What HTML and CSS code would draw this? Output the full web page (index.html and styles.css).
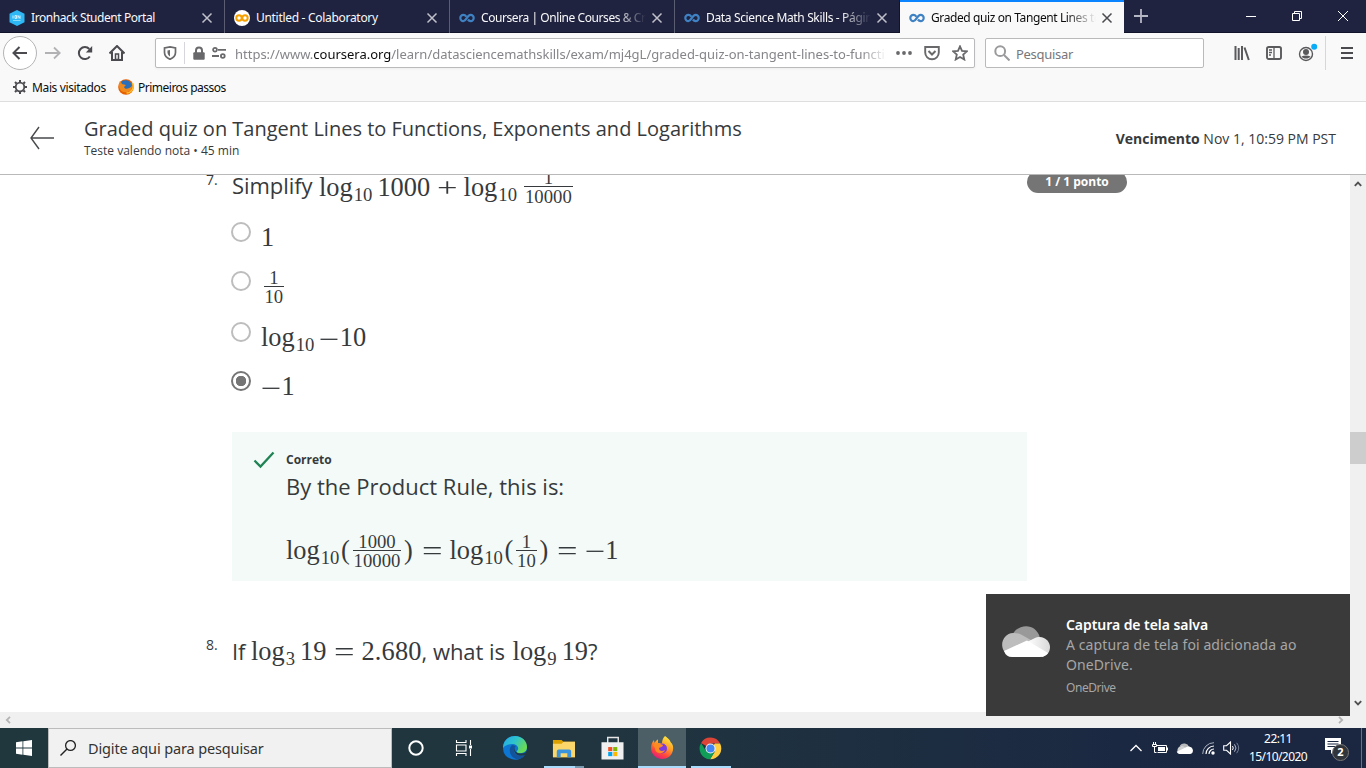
FILE: index.html
```html
<!DOCTYPE html>
<html lang="pt-BR">
<head>
<meta charset="utf-8">
<title>Graded quiz on Tangent Lines to Functions</title>
<link rel="stylesheet" href="styles.css">
</head>
<body>
<svg class="defs" width="0" height="0">
  <symbol id="x" viewBox="0 0 12 12"><path d="M1.500 1.500l9 9M10.500 1.500l-9 9" fill="none" stroke="currentColor" stroke-width="1.500"/></symbol>
  <symbol id="coursera" viewBox="0 0 16 10"><path d="M7.300 3.600C6.500 2.500 5.500 1.900 4.400 1.900a3.100 3.100 0 0 0 0 6.200C7.600 8.100 7.900 1.900 11.600 1.900a3.100 3.100 0 0 1 0 6.200c-1.200 0-2-.6-2.700-1.600" fill="none" stroke="#3f82c4" stroke-width="2.200"/></symbol>
</svg>

<header class="tabs">
  <div class="tab">
    <svg class="fav" viewBox="0 0 16 16"><path d="M8 0l7.500 3.800v8.400L8 16 .5 12.200V3.800z" fill="#2db8f5"/><path d="M4 5.500v3M6 5.500h1.500v3H6zM9 8.500v-3l2 3v-3" fill="none" stroke="#e2f6ff" stroke-width=".9"/><path d="M4 10.500h7.500" stroke="#8bdafa"/></svg>
    <span class="label t1">Ironhack Student Portal</span><svg class="close"><use href="#x"/></svg>
  </div>
  <div class="tab">
    <svg class="fav" viewBox="0 0 16 16"><circle cx="8" cy="8" r="8" fill="#fff"/><g fill="none" stroke="#f6a000" stroke-width="2"><circle cx="5" cy="8" r="2.700"/><circle cx="11" cy="8" r="2.700"/></g></svg>
    <span class="label t2">Untitled - Colaboratory</span><svg class="close"><use href="#x"/></svg>
  </div>
  <div class="tab">
    <svg class="fav"><use href="#coursera"/></svg>
    <span class="label t3 fade">Coursera | Online Courses &amp; Cre</span><svg class="close"><use href="#x"/></svg>
  </div>
  <div class="tab nosep">
    <svg class="fav"><use href="#coursera"/></svg>
    <span class="label t4 fade">Data Science Math Skills - Págin</span><svg class="close"><use href="#x"/></svg>
  </div>
  <div class="tab active">
    <svg class="fav"><use href="#coursera"/></svg>
    <span class="label t5 fade">Graded quiz on Tangent Lines to</span><svg class="close"><use href="#x"/></svg>
  </div>
  <svg class="newtab" viewBox="0 0 16 16"><path d="M8 1v14M1 8h14" stroke="#b5b6c4" stroke-width="1.800"/></svg>
  <div class="winbtns">
    <svg viewBox="0 0 12 12"><path d="M1 6.500h10" stroke="#fff"/></svg>
    <svg viewBox="0 0 12 12"><path d="M1.500 3.500h7v7h-7zM3.500 3.500v-2h7v7h-2" fill="none" stroke="#fff"/></svg>
    <svg viewBox="0 0 12 12"><path d="M1 1l10 10M11 1L1 11" stroke="#fff"/></svg>
  </div>
</header>

<nav class="toolbar">
  <div class="back"><svg class="i16" viewBox="0 0 16 16"><path d="M15 8H2M7.500 2L1.500 8l6 6" fill="none" stroke="#4a4a4f" stroke-width="2"/></svg></div>
  <svg class="i16 fwd" viewBox="0 0 16 16"><path d="M0 8h14M9 2.500L14.700 8 9 13.500" fill="none" stroke="#b2b2b4" stroke-width="1.800"/></svg>
  <svg class="i16 reload" viewBox="0 0 16 16"><path d="M12.800 11.500A6 6 0 1 1 12.300 4" fill="none" stroke="#4a4a4f" stroke-width="2"/><path d="M15.200 1v6.500H8.800z" fill="#4a4a4f"/></svg>
  <svg class="i16 home" viewBox="0 0 16 16"><path d="M.5 8.500L8 1l7.500 7.500M3 7v8h10V7" fill="none" stroke="#4a4a4f" stroke-width="2"/><path d="M6.500 9h3v5.500h-3z" fill="none" stroke="#4a4a4f" stroke-width="1.500"/></svg>
  <div class="urlbar">
    <svg class="shield" viewBox="0 0 14 14"><path d="M7 .9L12.500 2v4.500c0 3.400-2.500 5.500-5.500 6.800C4 12 1.500 9.900 1.500 6.500V2z" fill="none" stroke="#69696c" stroke-width="1.700"/><path d="M7 4v6.500C5.500 9.500 4.500 8 4.500 6.500v-2z" fill="#69696c"/></svg>
    <i class="vsep"></i>
    <svg class="lock" viewBox="0 0 14 14"><path d="M4 7V4.500a3 3 0 0 1 6 0V7" fill="none" stroke="#69696c" stroke-width="2"/><rect x="1.300" y="6.200" width="11.400" height="7.600" rx="1" fill="#69696c"/></svg>
    <svg class="perm" viewBox="0 0 14 12"><g fill="none" stroke="#69696c" stroke-width="1.800"><circle cx="3" cy="2.800" r="1.900"/><path d="M6 2.800h8M0 9h7"/><circle cx="10.800" cy="9" r="1.900"/></g></svg>
    <span class="url">https://www.<b>coursera.org</b>/learn/datasciencemathskills/exam/mj4gL/graded-quiz-on-tangent-lines-to-functi</span>
    <svg class="i16 dots" viewBox="0 0 16 16"><g fill="#69696c"><circle cx="2" cy="8" r="1.900"/><circle cx="8" cy="8" r="1.900"/><circle cx="14" cy="8" r="1.900"/></g></svg>
    <svg class="i16" viewBox="0 0 16 16"><path d="M1.200 2h13.600v5.500a6.800 6.800 0 0 1-13.600 0z" fill="none" stroke="#69696c" stroke-width="1.900"/><path d="M4.500 6L8 9.500 11.500 6" fill="none" stroke="#69696c" stroke-width="2"/></svg>
    <svg class="i16 star" viewBox="0 0 16 16"><path d="M8 1.300l2 4.500 4.900.5-3.700 3.300 1.100 4.900L8 12l-4.300 2.500 1.100-4.900L1.100 6.300 6 5.800z" fill="none" stroke="#69696c" stroke-width="1.800"/></svg>
  </div>
  <div class="searchbar">
    <svg class="i16" viewBox="0 0 16 16"><circle cx="6.200" cy="6.200" r="4.900" fill="none" stroke="#9a9a9c" stroke-width="2"/><path d="M10 10l5.500 5.500" stroke="#9a9a9c" stroke-width="2"/></svg>
    <span>Pesquisar</span>
  </div>
  <svg class="i16 lib" viewBox="0 0 16 16"><path d="M1.500 1v14M4.700 3v12M8 1v14M10.500 2.500l4.300 12.500" stroke="#5a5a5d" stroke-width="2" fill="none"/></svg>
  <svg class="i16 side" viewBox="0 0 16 16"><rect x="1" y="2" width="14" height="12" rx="1.800" fill="none" stroke="#5a5a5d" stroke-width="1.900"/><path d="M8 2v12M3 5h3M3 7.500h3M3 10h2" stroke="#5a5a5d" stroke-width="1.300"/></svg>
  <svg class="acct" viewBox="0 0 20 20"><circle cx="8" cy="12" r="6.500" fill="none" stroke="#5a5a5d" stroke-width="1.400"/><circle cx="8" cy="10" r="3" fill="#5a5a5d"/><path d="M3.500 14.500c2 2.800 7 2.800 9 0-2.500-1.500-6.500-1.500-9 0z" fill="#5a5a5d"/><circle cx="16.200" cy="4.700" r="3" fill="#0aacf7"/></svg>
  <i class="vsep tall"></i>
  <svg class="menu" viewBox="0 0 12 14"><path d="M0 2h12M0 7h12M0 12h12" stroke="#4a4a4f" stroke-width="2"/></svg>
</nav>

<nav class="bookmarks">
  <svg class="gear" viewBox="0 0 16 16"><circle cx="8" cy="8" r="4.300" fill="none" stroke="#4a4a4f" stroke-width="1.800"/><path d="M8 1v2M8 13v2M1 8h2M13 8h2M3 3l1.500 1.500M11.500 11.500L13 13M3 13l1.500-1.500M11.500 4.500L13 3" stroke="#4a4a4f" stroke-width="2"/></svg>
  <span class="bm1">Mais visitados</span>
  <svg class="ff" viewBox="0 0 16 16"><circle cx="8" cy="8" r="7.800" fill="#e66000"/><path d="M4 2a7 7 0 0 1 9 2c2 3 0 7-4 7S2 6 4 2z" fill="#2b6fb8"/><path d="M2 2l2 3 4 1-2 2c1 3 5 2 8-1 0 5-4 7-8 6-5-1-6-7-4-11z" fill="#f08a1c"/><path d="M14.500 4c2 5-1 10-6 10" fill="none" stroke="#ffc02c" stroke-width="1.500"/></svg>
  <span class="bm2">Primeiros passos</span>
</nav>

<header class="quizhead">
  <svg class="bigback" viewBox="0 0 24 24"><path d="M24 12H1M9 1L1 12l8 11" fill="none" stroke="#47494c" stroke-width="1.400"/></svg>
  <div class="titles">
    <h1>Graded quiz on Tangent Lines to Functions, Exponents and Logarithms</h1>
    <p>Teste valendo nota • 45 min</p>
  </div>
  <div class="due"><b>Vencimento</b> Nov 1, 10:59 PM PST</div>
</header>

<div class="view">
  <main class="quiz">
    <section class="q q7">
      <span class="num">7.</span>
      <div class="row">
        <span class="txt simplify">Simplify</span><span>log</span><span class="sub">10</span><span class="arg">1000</span><span class="op bin">+</span><span>log</span><span class="sub">10</span><span class="frac arg"><span>1</span><span>10000</span></span>
      </div>
      <span class="points">1 / 1 ponto</span>
    </section>
    <ul class="options">
      <li class="o1"><i class="radio"></i><div class="row"><span>1</span></div></li>
      <li class="o2"><i class="radio"></i><div class="row"><span class="frac"><span>1</span><span>10</span></span></div></li>
      <li class="o3"><i class="radio"></i><div class="row"><span>log</span><span class="sub">10</span><span class="op arg">−</span><span>10</span></div></li>
      <li class="o4"><i class="radio on"></i><div class="row"><span class="op">−</span><span>1</span></div></li>
    </ul>
    <section class="feedback">
      <svg class="check" viewBox="0 0 22 18"><path d="M1.500 9.500l6 6L20.500 1.500" fill="none" stroke="#1f8354" stroke-width="2.300"/></svg>
      <div>
        <h2>Correto</h2>
        <p>By the Product Rule, this is:</p>
        <div class="row">
          <span>log</span><span class="sub">10</span><span class="par">(</span><span class="frac"><span>1000</span><span>10000</span></span><span class="par">)</span><span class="op rel">=</span><span>log</span><span class="sub">10</span><span class="par">(</span><span class="frac"><span>1</span><span>10</span></span><span class="par">)</span><span class="op rel">=</span><span class="op">−</span><span>1</span>
        </div>
      </div>
    </section>
    <section class="q q8">
      <span class="num">8.</span>
      <div class="row">
        <span class="txt if">If</span><span>log</span><span class="sub">3</span><span class="arg">19</span><span class="op rel">=</span><span class="dec">2.680</span><span class="txt what">, what is</span><span>log</span><span class="sub">9</span><span class="arg">19</span><span class="txt">?</span>
      </div>
    </section>
  </main>
  <aside class="vscroll">
    <svg viewBox="0 0 8 6"><path d="M.8 4.800L4 1.600l3.200 3.200" fill="none" stroke="#505050" stroke-width="1.900"/></svg>
    <i class="thumb"></i>
    <svg viewBox="0 0 8 6"><path d="M.8 1.200L4 4.400l3.200-3.200" fill="none" stroke="#505050" stroke-width="1.900"/></svg>
  </aside>
</div>
<div class="hscroll">
  <svg viewBox="0 0 6 8"><path d="M5 .8L1.800 4 5 7.200" fill="none" stroke="#b4b4b4" stroke-width="1.800"/></svg>
  <svg viewBox="0 0 6 8"><path d="M1 .8L4.200 4 1 7.200" fill="none" stroke="#b4b4b4" stroke-width="1.800"/></svg>
</div>

<footer class="taskbar">
  <div class="start"><svg viewBox="0 0 16 16"><path d="M0 2.200L6.500 1.300v6.200H0zM7.300 1.200L16 0v7.500H7.300zM0 8.400h6.500v6.300L0 13.800zM7.300 8.400H16V16l-8.700-1.200z" fill="#fff"/></svg></div>
  <div class="tsearch">
    <svg viewBox="0 0 16 16"><circle cx="10.500" cy="5.500" r="4.900" fill="none" stroke="#222" stroke-width="1.300"/><path d="M7 9L.5 15.500" stroke="#222" stroke-width="1.400"/></svg>
    <span>Digite aqui para pesquisar</span>
  </div>
  <div class="app cortana"><svg viewBox="0 0 24 24"><circle cx="12" cy="12" r="6.700" fill="none" stroke="#fff" stroke-width="2"/></svg></div>
  <div class="app"><svg viewBox="0 0 24 24"><path d="M4.500 4v2.500h9.500V4M4.500 20v-2.500h9.500v2.500M4.500 9h9.500v6H4.500zM18.500 4v5M18.500 13v7" fill="none" stroke="#fff" stroke-width="1.100"/><path d="M17 9.500h3v3h-3z" fill="#fff"/></svg></div>
  <div class="app edge"><svg viewBox="0 0 24 24">
    <defs><linearGradient id="e1" x1="0" y1="0" x2="1" y2=".5"><stop offset="0" stop-color="#27a5e8"/><stop offset=".5" stop-color="#2cc3cf"/><stop offset="1" stop-color="#69db54"/></linearGradient></defs>
    <path d="M0 12C0 5 5 0 12 0s12 5 12 12q0 2-1 4l-1.500 3A12 12 0 0 1 0 12z" fill="#0d76d2"/><path d="M0 12C0 5 5 0 12 0c7 0 12 5 12 11 0 4-3 6-7 6-3 0-4-1-3-2 3-3 0-7-5-7C5 8 1 10 0 12z" fill="url(#e1)"/><path d="M9 9c-5 5-1 14 6 14 3 0 6-2 7-4-7 3-12-1-11-6 0-2 2-3 2-3z" fill="#12539b"/><path d="M12.500 10.500c-2 3 0 7 5 7 3 0 5-1 6-2l-1.500 3.500c-3 1.500-8 1-10-2-1.500-2-1-5 .5-6.500z" fill="#20394a"/></svg></div>
  <div class="app files"><svg viewBox="0 0 24 24"><path d="M1 3h9l2 2h12v16H1z" fill="#dca000"/><path d="M1 7h9l2-2h12v16H1z" fill="#fbd66b"/><path d="M5 21v-6q0-2 2-2h11q2 0 2 2v6h-4v-4H9v4z" fill="#3994dd"/></svg><i class="run wide"></i></div>
  <div class="app store"><svg viewBox="0 0 24 24"><path d="M7 7V1h11v6" fill="none" stroke="#e6e6e6" stroke-width="1.500"/><path d="M.5 6h23v18H.5z" fill="#f0f0f0"/><path d="M7.500 11h4.300v4.300H7.500z" fill="#f25022"/><path d="M12.700 11H17v4.300h-4.300z" fill="#7fba00"/><path d="M7.500 16.200h4.300v4.300H7.500z" fill="#00a4ef"/><path d="M12.700 16.200H17v4.300h-4.300z" fill="#ffb900"/></svg></div>
  <div class="app current"><svg viewBox="0 0 24 24">
    <defs><linearGradient id="f1" x1=".8" y1="0" x2=".3" y2="1"><stop offset="0" stop-color="#fff044"/><stop offset=".45" stop-color="#ff9a25"/><stop offset=".75" stop-color="#ff453c"/><stop offset="1" stop-color="#e21884"/></linearGradient></defs>
    <path d="M15 0c4 3 5 4 5.500 6C23 8 23.500 11 23 14c-1 6-6 9-11 9S1.500 19 1 13c0-4 1-7 3-9l.5 3C6 5 7 3.500 8 3.500V7l4 .5c0-3 1-6 3-7.500z" fill="url(#f1)"/><circle cx="12" cy="12.500" r="5" fill="#7c3ce0"/><path d="M3 9l5-2 5 2c0 2-3 2-4 3 0 3 3 4 6 2-2 5-10 4-10-2z" fill="#ff8a22"/></svg><i class="run"></i></div>
  <div class="app chrome"><svg viewBox="0 0 24 24"><path d="M12 12L2.200 6.200A11.300 11.300 0 0 1 22 6.800H12z" fill="#db4437"/><path d="M12 12l4.700-5.200H22A11.300 11.300 0 0 1 11.500 23.300L16.500 15z" fill="#ffcd40"/><path d="M12 12l4.500 3-5 8.300A11.300 11.300 0 0 1 2.200 6.200l5 8.500z" fill="#0f9d58"/><circle cx="12" cy="12" r="5.300" fill="#f1f1f1"/><circle cx="12" cy="12" r="4.200" fill="#4285f4"/></svg><i class="run"></i></div>
  <div class="tray">
    <svg class="chev" viewBox="0 0 12 8"><path d="M.5 7L6 1.500 11.500 7" fill="none" stroke="#fff" stroke-width="1.300"/></svg>
    <svg class="batt" viewBox="0 0 16 12"><path d="M4.500 3.500h10v7h-9M15.500 5.500v3M1.500 0v2M3.500 0v2M.5 2.500h4v2h-4zM2.500 5v5.500h2" fill="none" stroke="#fff"/><path d="M6 5h7v4H6z" fill="#fff"/></svg>
    <svg class="cloud" viewBox="0 0 48 31"><path d="M11 7a15 15 0 0 1 26 4L22 22z" fill="#b9b9b9"/><path d="M9 31a12 12 0 1 1 15-20l8 5L9 31z" fill="#d0d0d0"/><path d="M2 25l31-15c18-1 19 21 6 21H10q-6 0-8-6z" fill="#fff"/></svg>
    <svg class="wifi" viewBox="0 0 13 13"><g fill="none"><path d="M.7 12A11.300 11.300 0 0 1 12 .7" stroke="#a8afbe"/><path d="M4 12A8 8 0 0 1 12 4M7 12a5 5 0 0 1 5-5" stroke="#fff" stroke-width="1.200"/></g><circle cx="11" cy="11" r="1.700" fill="#fff"/></svg>
    <svg class="vol" viewBox="0 0 17 14"><path d="M.7 4.700h2.800L7.500 1v12L3.500 9.300H.7z" fill="none" stroke="#fff" stroke-width="1.100"/><path d="M9.500 5q1.500 2 0 4" fill="none" stroke="#fff"/><path d="M11.500 3.300q3 3.700 0 7.400" fill="none" stroke="#b8bfcc"/><path d="M13.700 1.800q4 5.200 0 10.400" fill="none" stroke="#758095"/></svg>
    <div class="clock"><span>22:11</span><span class="date">15/10/2020</span></div>
    <div class="note"><svg viewBox="0 0 16 16"><path d="M0 0h16v12h-6l-4 4v-4H0z" fill="#fff"/><path d="M2.500 3.500h11M2.500 6h11M2.500 8.500h8" stroke="#1b2842"/></svg><b>2</b></div>
    <i class="desk"></i>
  </div>
</footer>

<aside class="toast">
  <svg viewBox="0 0 48 31"><defs><linearGradient id="c1"><stop offset="0" stop-color="#fff"/><stop offset="1" stop-color="#d9d9d9"/></linearGradient></defs><path d="M11 8C16-2 34-4 38 12L24 22z" fill="#999"/><path d="M6 29C-5 22 1 6 12 7q5 0 8 2l14 8L12 29z" fill="#bdbdbd"/><path d="M25 16l7-3.500C41 8 48 15 48 21c0 6-4 9-8 10z" fill="url(#c1)"/><path d="M2 25l23-10.500L46 27q-3 4-8 4H10q-6 0-8-6z" fill="#fff"/></svg>
  <div>
    <h3>Captura de tela salva</h3>
    <p class="l1">A captura de tela foi adicionada ao</p>
    <p class="l2">OneDrive.</p>
    <small>OneDrive</small>
  </div>
</aside>
</body>
</html>
```
FILE: styles.css
```css
* { box-sizing: border-box; }
body { margin: 0; width: 1366px; height: 768px; overflow: hidden; position: relative; background: #fff; font-family: "Open Sans", "Noto Sans", sans-serif; color: #373a3c; display: flex; flex-direction: column; }
h1, h2, h3, p, ul { margin: 0; padding: 0; font-weight: normal; }
svg { display: block; flex: none; }
span { white-space: nowrap; }
i { display: block; flex: none; }
.defs { position: absolute; }
.i16 { width: 16px; height: 16px; }

.tabs { height: 33px; flex: none; display: flex; background: #202340; border-bottom: 1px solid #11132b; }
.tab { width: 225px; height: 33px; flex: none; display: flex; align-items: center; padding: 2px 11px 0 9px; border-right: 1px solid #5b5d73; color: #f9f9fa; font-family: "Noto Sans", sans-serif; font-size: 12px; }
.tab.nosep { border-right-color: #11132b; }
.tab.active { width: 224px; background: #f9f9fa; color: #0c0c0d; border-right: 0; border-top: 2px solid #0a84ff; padding: 0 11px 0 9px; }
.fav { width: 16px; height: 16px; margin-right: 6px; }
.label { flex: 1; overflow: hidden; }
.fade { -webkit-mask-image: linear-gradient(90deg, #000 82%, transparent); mask-image: linear-gradient(90deg, #000 82%, transparent); }
.close { width: 12px; height: 12px; margin-left: 5px; color: #c0c0cb; }
.active .close { color: #4a4a4f; }
.t1 { letter-spacing: -.43px; }
.t2 { letter-spacing: -.3px; }
.t3 { letter-spacing: -.43px; }
.t4 { letter-spacing: -.35px; }
.t5 { letter-spacing: -.4px; }
.newtab { width: 16px; height: 16px; margin: 8px 0 0 9px; }
.winbtns { margin-left: auto; display: flex; gap: 34px; padding: 10px 17px 0 0; }
.winbtns svg { width: 12px; height: 12px; }

.toolbar { height: 40px; flex: none; background: #f9f9fa; display: flex; align-items: center; padding-left: 3px; }
.back { width: 34px; height: 34px; border: 1px solid #b4b4b6; border-radius: 50%; background: #fff; display: flex; align-items: center; justify-content: center; }
.fwd { margin-left: 8px; }
.reload { margin-left: 16px; }
.home { margin-left: 16px; }
.urlbar { width: 820px; height: 30px; margin-left: 30px; border: 1px solid #bababc; border-radius: 2px; background: #fff; display: flex; align-items: center; padding-left: 7px; box-shadow: 0 1px 3px #0000000d; }
.shield { width: 14px; height: 14px; }
.vsep { width: 1px; height: 22px; background: #d7d7db; margin-left: 7px; }
.lock { width: 14px; height: 14px; margin-left: 7px; }
.perm { width: 14px; height: 12px; margin-left: 6px; }
.url { width: 652px; margin: 2px 0 0 9px; overflow: hidden; font-family: "Noto Sans", sans-serif; font-size: 13px; letter-spacing: -.01px; color: #85858a; -webkit-mask-image: linear-gradient(90deg, #000 96%, transparent); mask-image: linear-gradient(90deg, #000 96%, transparent); }
.url b { font-weight: normal; color: #0c0c0d; }
.dots { margin: 0 12px 0 9px; }
.star { margin-left: 12px; }
.searchbar { width: 219px; height: 30px; margin-left: 10px; border: 1px solid #bababc; border-radius: 2px; background: #fff; display: flex; align-items: center; gap: 6px; padding-left: 8px; font-family: "Noto Sans", sans-serif; font-size: 13px; letter-spacing: -.3px; color: #77777b; }
.searchbar span { margin-top: 2px; }
.lib { margin-left: 30px; }
.side { margin-left: 16px; }
.acct { width: 20px; height: 20px; margin: -3px 0 0 16px; }
.tall { height: 34px; margin-left: 7px; }
.menu { width: 12px; height: 14px; margin-left: 15px; }

.bookmarks { height: 29px; flex: none; background: #f9f9fa; border-bottom: 1px solid #dededf; display: flex; align-items: center; padding-left: 12px; font-family: "Noto Sans", sans-serif; font-size: 12px; color: #0c0c0d; }
.gear { width: 16px; height: 16px; margin-right: 4px; }
.ff { width: 16px; height: 16px; margin: 0 4px 0 12px; }
.bm1 { width: 74px; letter-spacing: -.37px; }
.bm2 { letter-spacing: -.5px; }

.quizhead { height: 73px; flex: none; background: #fff; border-bottom: 1px solid #b9b9b9; display: flex; align-items: center; padding: 0 30px; }
.bigback { width: 24px; height: 24px; }
.titles { margin: -3px 0 0 30px; }
.titles h1 { font-size: 20px; line-height: 28px; }
.titles p { font-size: 12px; line-height: 16px; }
.due { margin-left: auto; font-size: 14px; }

.view { height: 537px; flex: none; display: flex; overflow: hidden; }
.quiz { flex: 1; padding-left: 206px; }
.q { display: flex; height: 30px; }
.num { width: 26px; font-size: 14px; line-height: 20px; }
.row { display: flex; align-items: center; height: 30px; font-family: "Liberation Serif", serif; font-size: 26.4px; line-height: 30px; }
.row .txt { font-family: "Open Sans", sans-serif; font-size: 22px; letter-spacing: -.05px; margin-top: -1px; }
.sub { font-size: 18.7px; line-height: 20px; margin: 15px 0 0 1px; }
.arg { margin-left: 5px; }
.op { width: 20.4px; text-align: center; transform: scaleX(1.38); margin-top: 2px; }
.bin { margin: 1px 6.5px 0; }
.rel { margin: 2px 7.3px 0; }
.par { width: 10.2px; text-align: center; margin: 0 1px; }
.frac { display: flex; flex-direction: column; align-items: center; font-size: 18.7px; margin: 4px 1px 0; }
.frac span { line-height: 17px; padding: 0 1px; }
.frac span:last-child { border-top: 1px solid #373a3c; padding-top: 1px; }
.frac.arg { margin-left: 7px; }
.q7 .num { margin-top: -5px; }
.q7 .row { width: 795px; margin-top: -3px; }
.q7 .frac { margin-top: 0; }
.simplify { width: 87px; }
.row .simplify { margin-top: -4px; }
.points { width: 100px; height: 22px; margin-top: -4px; border-radius: 11px; background: #757575; color: #fff; font-size: 12px; line-height: 22px; font-weight: bold; text-align: center; }

.options { list-style: none; height: 227px; padding-left: 25px; }
.options li { display: flex; gap: 10px; height: 50px; }
.radio { width: 20px; height: 20px; margin-top: 17px; border: 2px solid #bdbdbd; border-radius: 50%; }
.radio.on { border-color: #757575; background: radial-gradient(circle, #757575 0 5px, transparent 5.5px); }
.options .row { margin-top: 17px; }
.options .op { margin-top: 3px; }
.options .o1 { height: 49px; }
.options .o2 { height: 51px; }
.options .o3 { height: 49px; }
.options .o2 .row { margin: 16px 0 0 1.5px; }

.feedback { width: 795px; height: 149px; margin-left: 26px; background: #f3faf8; display: flex; padding: 19px 0 0 21px; }
.check { width: 22px; height: 18px; margin-right: 11px; }
.feedback h2 { font-size: 12px; line-height: 18px; font-weight: bold; }
.feedback p { font-size: 22px; line-height: 34px; }
.feedback .row { margin-top: 32px; }
.feedback .frac { margin-top: 2px; }
.q8 { margin-top: 54px; }
.q8 .row { margin-top: 1px; }
.if { width: 19px; }
.dec { letter-spacing: .15px; }
.what { width: 91px; }

.vscroll { width: 16px; background: #f0f0f0; display: flex; flex-direction: column; align-items: center; padding: 6px 0; }
.vscroll svg { width: 8px; height: 6px; }
.thumb { width: 16px; height: 32px; background: #cdcdcd; margin: 245px 0 auto; }
.hscroll { height: 16px; flex: none; background: #f0f0f0; display: flex; align-items: center; justify-content: space-between; padding: 0 22px 0 5px; }
.hscroll svg { width: 6px; height: 8px; }

.taskbar { height: 40px; flex: none; display: flex; background: linear-gradient(90deg, #20373e, #20353f 45%, #1b2842 82%, #1b2640); }
.start { width: 48px; display: flex; align-items: center; justify-content: center; }
.start svg { width: 16px; height: 16px; }
.tsearch { width: 344px; background: #f1f1f1; border: 1px solid #bcbcbc; display: flex; align-items: center; gap: 12px; padding-left: 11px; color: #333; font-size: 15px; }
.tsearch svg { width: 16px; height: 16px; }
.tsearch span { font-family: "Noto Sans", sans-serif; font-size: 14.5px; letter-spacing: -.13px; }
.app { width: 48px; height: 40px; margin-right: 1px; display: flex; align-items: center; justify-content: center; position: relative; }
.app svg { width: 24px; height: 24px; }
.cortana { margin-right: 0; }
.cortana + .app { margin-right: 3px; }
.files svg { width: 23px; height: 23px; margin-right: 1px; }
.store svg { width: 23px; height: 24px; margin-right: 1px; }
.current svg { margin-right: 1px; }
.chrome svg { width: 23px; height: 23px; margin-right: 1px; }
.current { background: #4c5e66; }
.run { position: absolute; left: 0; bottom: 0; width: 48px; height: 2px; background: #a9dcfc; }
.run.wide { left: 4px; width: 40px; background: linear-gradient(90deg, #a9dcfc 31px, #7899ae 31px); }
.chrome .run { left: 4px; width: 40px; }
.tray { margin-left: auto; display: flex; align-items: center; color: #fff; font-family: "Noto Sans", sans-serif; font-size: 12px; }
.chev { width: 12px; height: 8px; }
.batt { width: 16px; height: 12px; margin-left: 10px; }
.cloud { width: 17px; height: 11px; margin-left: 8px; }
.wifi { width: 13px; height: 13px; margin-left: 9px; }
.vol { width: 17px; height: 14px; margin-left: 8px; }
.clock { width: 60px; margin-left: 8px; display: flex; flex-direction: column; align-items: center; line-height: 18px; letter-spacing: -.58px; }
.note { width: 26px; height: 20px; margin-left: 17px; position: relative; }
.note svg { width: 16px; height: 16px; }
.note b { position: absolute; left: 7px; top: 6px; width: 17px; height: 17px; border-radius: 50%; background: #30343b; border: 1px solid #777; font-size: 11px; line-height: 14px; text-align: center; }
.desk { width: 1px; height: 40px; background: #66708a; margin: 0 4px 0 10px; }

.toast { position: absolute; left: 986px; top: 594px; width: 364px; height: 122px; background: #3a3a3a; display: flex; padding: 21px 0 0 16px; font-family: "Noto Sans", sans-serif; color: #a6a6a6; }
.toast svg { width: 48px; height: 31px; margin: 11px 16px 0 0; }
.toast h3 { font-size: 14px; line-height: 20px; font-weight: 600; color: #fff; letter-spacing: -.06px; }
.toast p { font-size: 14px; line-height: 20px; letter-spacing: .1px; white-space: nowrap; }
.toast small { display: block; font-size: 12px; line-height: 16px; margin-top: 5px; letter-spacing: -.45px; }
```
